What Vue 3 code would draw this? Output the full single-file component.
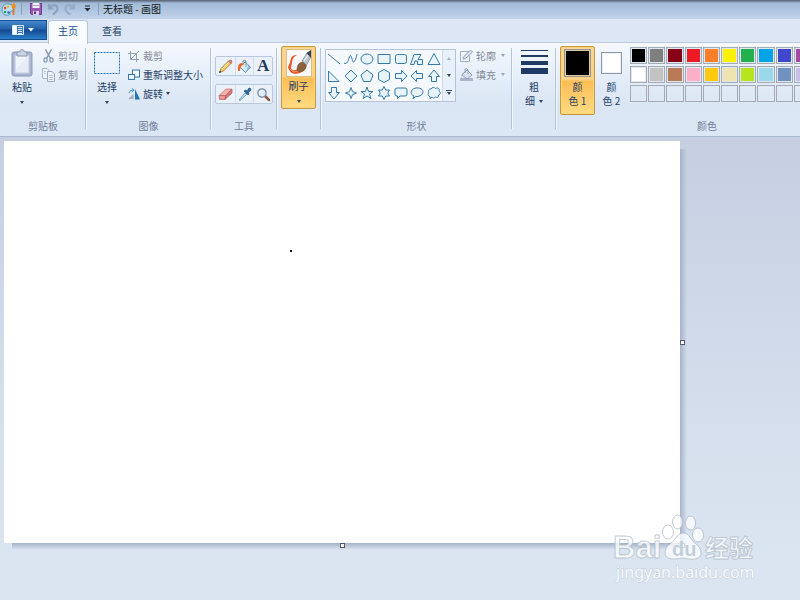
<script setup>
const shapes = [
  'M2 3L14 13',
  'M1 12C4 14 5 10 6 7S8 3 9 8S12 12 14 3',
  'M2 8A6 5 0 1 1 14 8A6 5 0 1 1 2 8Z',
  'M2 3.5H14V12.5H2Z',
  'M4.500 3.500H11.500Q13.500 3.500 13.500 5.500V10.500Q13.500 12.500 11.500 12.500H4.500Q2.500 12.500 2.500 10.500V5.500Q2.500 3.500 4.500 3.500Z',
  'M1.500 13.500L5 3.500H12L9 8.500H13.500V13.500H8.500V10H6L5 13.500Z',
  'M8 2.500L14 13.500H2Z',
  'M2.500 3V13.500H13Z',
  'M8 2L14 8L8 14L2 8Z',
  'M8 2L14 7L11.500 13.500H4.500L2 7Z',
  'M8 1.500L13.500 4.500V11.500L8 14.500L2.500 11.500V4.500Z',
  'M2.500 5.500H8.500V2.500L14 8L8.500 13.500V10.500H2.500Z',
  'M13.500 5.500H7.500V2.500L2 8L7.500 13.500V10.500H13.500Z',
  'M5.500 13.500V8.500H2.500L8 2L13.500 8.500H10.500V13.500Z',
  'M5.500 2.500V7.500H2.500L8 14L13.500 7.500H10.500V2.500Z',
  'M8 2.500L9.500 6.500L13.500 8L9.500 9.500L8 13.500L6.500 9.500L2.500 8L6.500 6.500Z',
  'M8 2L9.500 6.500H14L10.500 9L12 13.500L8 11L4 13.500L5.500 9L2 6.500H6.500Z',
  'M8 1.500L9.800 5H13.500L11.800 8L13.500 11H9.800L8 14.500L6.200 11H2.500L4.200 8L2.500 5H6.200Z',
  'M4 3H12Q14 3 14 5V9Q14 11 12 11H7L4.500 13.500V11H4Q2 11 2 9V5Q2 3 4 3Z',
  'M4 13.500L5 11C1 10 1 4.500 6 3.200C11 2 14.500 4.500 14 7.500C13.500 10.500 9 12 7 11.500Z',
  'M4 11.500C1.500 11 1.500 8.500 3 8C1.500 6 3 3.500 5 4C6 2 8.500 2 9.500 3.500C12 2 14 4 13 6C15 7 14.500 10 12.500 10C13 12 11 13 9.500 12C8 13.500 6.500 13 6 12L4 13.500Z'
]
const names = ['直线', '曲线', '椭圆形', '矩形', '圆角矩形', '多边形', '三角形', '直角三角形', '菱形', '五边形', '六边形', '右箭头', '左箭头', '上箭头', '下箭头', '四角星', '五角星', '六角星', '圆角矩形标注', '椭圆形标注', '云形标注']
const palette = [
  '#000000', '#7f7f7f', '#880015', '#ed1c24', '#ff7f27', '#fff200', '#22b14c', '#00a2e8', '#3f48cc', '#a349a4',
  '#ffffff', '#c3c3c3', '#b97a57', '#ffaec9', '#ffc90e', '#efe4b0', '#b5e61d', '#99d9ea', '#7092be', '#c8bfe7',
  ...Array(10).fill('')
]
</script>

<template>
  <div class="app">
    <header class="titlebar">
      <svg class="logo" width="16" height="16" viewBox="0 0 16 16" aria-hidden="true">
        <path d="M8 3C4 2 1 5 1 9C1 13 4 15 8 14C10 13 8 11 10 10C13 10 13 8 12 6C11 4 10 3.500 8 3Z" fill="#b9e0f2" stroke="#4d9cc0" />
        <circle cx="4" cy="7" r="1.300" fill="#e44a2b" /><circle cx="7" cy="5.500" r="1.300" fill="#f0b21c" />
        <circle cx="4" cy="11" r="1.300" fill="#31a04a" /><circle cx="7.500" cy="11.500" r="1.300" fill="#3a62c4" />
        <path d="M12.500 7V14" stroke="#d4812c" stroke-width="2" /><path d="M11 7L10.500 3L12 4L13 1L14.500 4V7Z" fill="#f38b1c" />
      </svg>
      <span class="tick"></span>
      <button class="quick" aria-label="保存">
        <svg width="14" height="14" viewBox="0 0 14 14"><path d="M1.500 1.500H12.500V12.500H2.500L1.500 11.500Z" fill="#9a55b5" stroke="#71398e" /><path d="M3.500 1H10.500V6H3.500Z" fill="#f1eff8" /><path d="M4 3.500H10" stroke="#b2a8c8" /><path d="M4 9H10V13H4Z" fill="#d6d1e5" /><path d="M5 9.500H7V12H5Z" fill="#5a3574" /></svg>
      </button>
      <button class="quick" aria-label="撤消">
        <svg width="14" height="14" viewBox="0 0 14 14"><path d="M3 2V6.500H7.500M3.500 6C6 2 11 2.500 11.500 6C12 9 9 11 7 12.500" fill="none" stroke="#8ea1c0" stroke-width="2.200" /></svg>
      </button>
      <button class="quick" aria-label="重做">
        <svg width="14" height="14" viewBox="0 0 14 14"><path d="M11 2V6.500H6.500M10.500 6C8 2 3 2.500 2.500 6C2 9 5 11 7 12.500" fill="none" stroke="#9aadc8" stroke-width="2.200" /></svg>
      </button>
      <button class="quick more" aria-label="自定义快速访问工具栏">
        <svg width="7" height="7" viewBox="0 0 7 7"><path d="M1 1H6" stroke="#222c3a" /><path d="M0.500 3H6.500L3.500 6.500Z" fill="#222c3a" /></svg>
      </button>
      <span class="tick"></span>
      <h1>无标题 - 画图</h1>
    </header>

    <nav class="tabs">
      <button class="file" aria-label="画图菜单">
        <svg width="22" height="10" viewBox="0 0 22 10"><path d="M0.500 0.500H11.500V9.500H0.500Z" fill="#fff" stroke="#dce9f8" /><path d="M5 1V9H11V1Z" fill="#3b76bb" /><path d="M6 2.500H10M6 4.500H10M6 6.500H10M6 8.500H10" stroke="#d6e6f7" /><path d="M16 3H22L19 6.500Z" fill="#fff" /></svg>
      </button>
      <button class="tab active">主页</button>
      <button class="tab">查看</button>
    </nav>

    <main class="ribbon">
      <section class="group clipboard">
        <div class="tools">
          <button class="large">
            <span class="pic"><svg width="22" height="28" viewBox="0 0 22 28"><rect x="1" y="3" width="20" height="24" rx="2" fill="#a8b5cd" stroke="#8c9bb9" /><path d="M4 6H18V24H4Z" fill="#e5ecf6" stroke="#c4cfdf" /><path d="M5 7H17L5 20Z" fill="#f0f4fa" /><path d="M6 7V3H8.500Q9 0.500 11 0.500T13.500 3H16V7Z" fill="#cbd4e3" stroke="#8999b6" /></svg></span>
            <span class="name">粘贴</span><i class="arrow"></i>
          </button>
          <div class="stack">
            <button class="small muted"><svg width="13" height="14" viewBox="0 0 13 14"><path d="M3.500 0.500L8.500 9.500M9.500 0.500L4.500 9.500" stroke="#8796b3" stroke-width="1.500" /><ellipse cx="3.500" cy="11" rx="1.600" ry="2.200" fill="none" stroke="#8796b3" stroke-width="1.200" /><ellipse cx="9.500" cy="11" rx="1.600" ry="2.200" fill="none" stroke="#8796b3" stroke-width="1.200" /></svg>剪切</button>
            <button class="small muted"><svg width="13" height="14" viewBox="0 0 13 14"><path d="M0.500 0.500H5L7.500 3V10.500H0.500Z" fill="#edf2f9" stroke="#a7b4ca" /><path d="M5.500 3.500H10L12.500 6V13.500H5.500Z" fill="#edf2f9" stroke="#9aa9c2" /><path d="M7 7.500H11M7 9.500H11M7 11.500H11M2 3.500H4M2 5.500H4" stroke="#b7c2d4" /></svg>复制</button>
          </div>
        </div>
        <h2>剪贴板</h2>
      </section>

      <section class="group image">
        <div class="tools">
          <button class="large">
            <span class="pic"><svg width="26" height="22" viewBox="0 0 26 22"><rect x="0.500" y="0.500" width="25" height="21" fill="#eaf3fc" fill-opacity=".6" stroke="#2176b2" stroke-dasharray="2 1" /></svg></span>
            <span class="name">选择</span><i class="arrow"></i>
          </button>
          <div class="stack">
            <button class="small muted"><svg width="12" height="12" viewBox="0 0 12 12"><path d="M2.500 1V9.500H11M0 3.500H8.500V12M3 9L11 1" fill="none" stroke="#92a1b9" /></svg>裁剪</button>
            <button class="small"><svg width="12" height="12" viewBox="0 0 12 12"><rect x="4.500" y="1" width="7" height="7" fill="#f4faff" stroke="#3179aa" /><rect x="0.500" y="5.500" width="6" height="5" fill="#eef7ff" stroke="#3179aa" /></svg>重新调整大小</button>
            <button class="small"><svg width="12" height="12" viewBox="0 0 12 12"><path d="M0 11L5.500 6V11Z" fill="#a7afba" /><path d="M7 1V11.500H12Z" fill="#1e76b5" /><path d="M1 5Q2 1.500 5 2M4 0.500L6 2L4 4" fill="none" stroke="#3b94d1" /></svg>旋转<i class="arrow"></i></button>
          </div>
        </div>
        <h2>图像</h2>
      </section>

      <section class="group toolset">
        <div class="tools toolrows">
          <div class="toolrow">
            <button aria-label="铅笔"><svg width="15" height="15" viewBox="0 0 15 15"><path d="M1.500 13.500L3 9.500L10.500 2L13 4.500L5.500 12Z" fill="#f3cf66" stroke="#9d7142" stroke-width=".8" /><path d="M10.500 2L12 1Q14 1 14 3L13 4.500Z" fill="#e67e7d" stroke="#a55656" stroke-width=".6" /><path d="M1 14L2 11.500L3.500 13Z" fill="#363e49" /><path d="M4 10L10.500 3.500" stroke="#fff0ac" /></svg></button>
            <button aria-label="填充"><svg width="15" height="15" viewBox="0 0 15 15"><path d="M3 8L8 3L13.500 8L8.500 13.500Z" fill="#d5ebf7" stroke="#5b8daf" /><path d="M6 6V2Q7.500 0.500 9 2V8" fill="none" stroke="#7897ac" /><path d="M1 12Q0 5 4 4L8 5Q3 6 3 12Z" fill="#ea6b32" /><path d="M11 7L13.500 8L9 13Z" fill="#82b7d8" /></svg></button>
            <button class="letter">A</button>
          </div>
          <div class="toolrow">
            <button aria-label="橡皮擦"><svg width="15" height="15" viewBox="0 0 15 15"><path d="M1 8.500L8 2H14L7.500 8.500Z" fill="#f6b1b0" stroke="#c76f70" stroke-width=".7" /><path d="M1 8.500H7.500L7 12.500H1.500Z" fill="#ef9691" stroke="#b65e60" stroke-width=".7" /><path d="M7.500 8.500L14 2V6L7 12.500Z" fill="#d97375" stroke="#b65e60" stroke-width=".7" /></svg></button>
            <button aria-label="颜色选取器"><svg width="15" height="15" viewBox="0 0 15 15"><path d="M2 13L8 6L9.500 7.500L3 13.500Z" fill="#c7e4f5" stroke="#578baf" stroke-width=".8" /><path d="M7 4L8.500 3L10 4L12 1Q14 1 14 3L11.500 5.500L12 7L11 8Z" fill="#2a6aa4" stroke="#214f7d" stroke-width=".7" /></svg></button>
            <button aria-label="放大镜"><svg width="15" height="15" viewBox="0 0 15 15"><path d="M9 9L13 13" stroke="#8d5c40" stroke-width="2.500" stroke-linecap="round" /><circle cx="6" cy="6" r="4.200" fill="#dceefa" stroke="#77899e" stroke-width="1.200" /><path d="M3.500 6Q4 3.500 6.500 3.500" stroke="#fff" fill="none" /></svg></button>
          </div>
        </div>
        <h2>工具</h2>
      </section>

      <section class="group brushes">
        <button class="pressed brush">
          <svg width="26" height="28" viewBox="0 0 26 28"><rect x=".5" y=".5" width="25" height="27" fill="#fafafa" stroke="#d8bd80" /><path d="M11 6C3 6 6 11 2 18C4 27 13 26 19 21L15 19C9 22 5 22 5 18C7 13 5 9 11 6Z" fill="#e85527" /><path d="M4 20Q8 25 15 21" fill="none" stroke="#fb9467" /><path d="M11 21C11 15 14 13 18 13C21 15 21 19 18 21C15 23 12 23 11 21Z" fill="#8e623c" stroke="#67452d" stroke-width=".6" /><path d="M16 12L21 4L25 8L20.500 16Z" fill="#bec8d2" stroke="#758593" stroke-width=".7" /><path d="M20.500 4L25 1V9Z" fill="#344256" /><path d="M18 12L22 6" stroke="#f7fbff" /></svg>
          <span class="name">刷子</span><i class="arrow"></i>
        </button>
      </section>

      <section class="group shapes">
        <div class="tools">
          <div class="gallery">
            <div class="shapegrid">
              <button v-for="(d, i) in shapes" :key="i" :aria-label="names[i]"><svg width="16" height="16" viewBox="0 0 16 16"><path :d="d" :fill="i < 2 ? 'none' : '#e8f4fc'" stroke="#3479aa" /></svg></button>
            </div>
            <div class="scroller">
              <button aria-label="向上滚动"><i class="arrow up"></i></button>
              <button aria-label="向下滚动"><i class="arrow"></i></button>
              <button class="expand" aria-label="展开"><i class="arrow"></i></button>
            </div>
          </div>
          <div class="stack">
            <button class="small muted"><svg width="13" height="13" viewBox="0 0 13 13"><path d="M9 2.500H0.500V12.500H9.500V7" fill="none" stroke="#a1afc5" /><path d="M3 10L4 7.500L10.500 1L12.500 3L5.500 9.500Z" fill="#dfe6f0" stroke="#8e9db8" /></svg>轮廓<i class="arrow"></i></button>
            <button class="small muted"><svg width="13" height="13" viewBox="0 0 13 13"><path d="M0 10H13V13H0Z" fill="#a9b6cc" /><path d="M2 7L7 2L12 7L7 11Z" fill="#dae2ee" stroke="#8f9fba" /><path d="M5 5V1Q6.500 0 8 2V6" fill="none" stroke="#8f9fba" /><path d="M1 10Q1 5 5 4L2 7Z" fill="#93a3bf" /></svg>填充<i class="arrow"></i></button>
          </div>
        </div>
        <h2>形状</h2>
      </section>

      <section class="group size">
        <button class="large thickness">
          <span class="pic"><svg width="27" height="26" viewBox="0 0 27 26"><path d="M0 1H27V2H0ZM0 6H27V8H0ZM0 12H27V16H0ZM0 19H27V25H0Z" fill="#1f3b64" /></svg></span>
          <span class="name">粗<br />细<i class="arrow"></i></span>
        </button>
      </section>

      <section class="group colors">
        <div class="tools">
          <button class="pressed color"><span class="chip"></span><span class="name">颜<br />色 1</span></button>
          <button class="color second"><span class="chip"></span><span class="name">颜<br />色 2</span></button>
          <div class="palette">
            <button v-for="(c, i) in palette" :key="i" :class="{ empty: !c }" :style="{ backgroundColor: c }" :aria-label="c || '自定义颜色'"></button>
          </div>
        </div>
        <h2>颜色</h2>
      </section>
    </main>

    <div class="workspace">
      <div class="sheet">
        <span class="dot"></span>
        <span class="handle east"></span>
        <span class="handle south"></span>
        <span class="handle corner"></span>
      </div>
      <svg class="watermark" width="150" height="72" viewBox="0 0 150 72">
        <g class="mark">
          <ellipse cx="58" cy="19" rx="5.500" ry="7" /><ellipse cx="67.500" cy="9" rx="5" ry="7" /><ellipse cx="80.500" cy="10" rx="5" ry="7" /><ellipse cx="88" cy="22" rx="5.500" ry="7" />
          <path d="M73 20C67 20 66 27 60 31C53 36 53 46 63 46C68 46 70 45 73 45S80 47 85 46C93 45 93 36 86 31C80 27 80 20 73 20Z" />
          <text class="brand" x="3" y="45">Bai</text>
          <text class="cn" x="95" y="44">经验</text>
        </g>
        <text class="du" x="62" y="43">du</text>
        <text class="url" x="6" y="65">jingyan.baidu.com</text>
      </svg>
    </div>
  </div>
</template>

<style>
body { margin: 0; }
</style>

<style scoped>
.app {
  display: flex;
  flex-direction: column;
  min-height: 100vh;
  overflow: hidden;
  position: relative;
  font: 10px/14px "Noto Sans CJK SC", sans-serif;
  color: #243f66;
  background: #dce6f4;
}
button { font: inherit; color: inherit; background: none; border: 0; padding: 0; margin: 0; }
svg { display: block; flex: none; }
h1, h2 { margin: 0; font: inherit; }
.titlebar {
  display: flex;
  align-items: center;
  box-sizing: border-box;
  height: 19px;
  padding: 0 0 2px 1px;
  background: linear-gradient(#555f6b, #8398b0 2px, #a2bad7 3px, #b3c8e1 12px, #c1d3e8);
}
.logo { margin-right: 4px; }
.tick { width: 1px; height: 12px; background: #8b9eb8; }
.quick { width: 17px; display: grid; place-items: center; }
.tick + .quick { margin-left: 5px; }
.more { width: 14px; margin: 0 4px 0 2px; }
.titlebar h1 { margin-left: 4px; color: #101820; }
.tabs { display: flex; height: 23px; background: #dce6f4; }
.file {
  width: 47px;
  height: 20px;
  margin: 1px 1px 0 0;
  display: grid;
  place-items: center;
  background: linear-gradient(#4588cb, #2361a9 45%, #134a91 50%, #2a80c8);
  border: 1px solid #164d8d;
  border-left: 0;
}
.tab { width: 40px; height: 22px; padding-bottom: 1px; margin-top: 1px; margin-right: 4px; border: 1px solid transparent; border-bottom: 0; }
.tab.active { height: 24px; padding-bottom: 3px; background: #f8fbff; border-color: #b6c7dc; border-radius: 3px 3px 0 0; position: relative; z-index: 1; color: #1e4b8f; }
.ribbon {
  display: flex;
  height: 93px;
  border-top: 1px solid #bccbdf;
  border-bottom: 1px solid #a9b9cf;
  background: linear-gradient(#f5f9fe, #e5eefa 35%, #dbe6f4 65%, #dce7f5);
}
.group { position: relative; flex: none; box-sizing: border-box; display: flex; flex-direction: column; padding: 3px 4px; }
.group::after { content: ""; position: absolute; right: 0; top: 5px; bottom: 7px; width: 1px; background: #b3c3d9; box-shadow: 1px 0 #f2f7fd; }
.group h2 { margin-top: auto; text-align: center; color: #71809a; }
.tools { display: flex; }
.clipboard { width: 86px; }
.image { width: 125px; }
.toolset { width: 66px; }
.brushes { width: 44px; }
.shapes { width: 191px; }
.size { width: 44px; }
.colors { width: 302px; }
.large { width: 36px; display: flex; flex-direction: column; align-items: center; }
.pic { height: 34px; display: grid; place-items: center; }
.name { line-height: 14px; text-align: center; }
.large .arrow { margin-top: 7px; }
.clipboard .stack { padding-left: 2px; }
.image .large { width: 34px; }
.image .stack { padding-left: 4px; }
.small { display: flex; align-items: center; gap: 3px; height: 19px; white-space: nowrap; }
.muted { color: #838b97; }
.arrow { flex: none; display: inline-block; width: 0; height: 0; border: 2px solid transparent; border-top: 3px solid #2d4566; border-bottom: 0; }
.muted .arrow { border-top-color: #9aa3b0; margin-left: 2px; }
.toolrows { flex-direction: column; padding-top: 10px; gap: 8px; }
.toolrow { display: grid; grid-template-columns: repeat(3, 1fr); box-sizing: border-box; height: 20px; border: 1px solid #b9c8dd; border-radius: 2px; background: #eaf1fa; }
.toolrow button { display: grid; place-items: center; }
.toolrow button + button { border-left: 1px solid #d3deed; }
.toolrow .letter { font: bold 17px/18px "Liberation Serif", serif; color: #213c61; }
.pressed { box-sizing: border-box; border: 1px solid #c49a44; border-radius: 2px; background: linear-gradient(#fbd59d, #fdd08a 49%, #fdbd55 51%, #ffdb81); box-shadow: inset 0 0 0 1px #fbd479; }
.brush { width: 35px; height: 63px; display: flex; flex-direction: column; align-items: center; padding-top: 2px; }
.brush .name { margin-top: 2px; }
.brush .arrow { margin-top: 7px; }
.gallery { display: flex; box-sizing: border-box; width: 131px; height: 53px; margin: 3px 4px 0 0; border: 1px solid #b4c3d8; background: #f5f9fe; }
.shapegrid { flex: 1; display: grid; grid-template-columns: repeat(7, 1fr); grid-template-rows: repeat(3, 1fr); }
.shapegrid button { display: grid; place-items: center; }
.scroller { width: 12px; display: grid; grid-template-rows: repeat(3, 1fr); border-left: 1px solid #cdd8e7; background: #e8f0fa; }
.scroller button { display: grid; place-items: center; align-content: center; gap: 1px; }
.scroller .up { border-top: 0; border-bottom: 3px solid #a3aebd; }
.expand::before { content: ""; width: 6px; height: 1px; background: #2d4566; }
.thickness .pic { height: 32px; }
.thickness .name { padding-top: 2px; }
.thickness .name .arrow { margin: 0 0 2px 4px; }
.color { width: 35px; height: 69px; display: flex; flex-direction: column; align-items: center; padding-top: 3px; }
.chip { box-sizing: border-box; width: 21px; height: 22px; margin: 3px 0 6px; background: #fff; border: 1px solid #8e98a6; box-shadow: inset 0 0 0 1px #edf1f6; }
.pressed .chip { width: 27px; height: 28px; margin: 0 0 3px; background: #000; border-color: #989487; box-shadow: inset 0 0 0 1px #d9cba9; }
.pressed.color { padding-top: 2px; }
.second { width: 33px; }
.palette { display: grid; grid-template-columns: repeat(10, 1fr); grid-auto-rows: 17px; gap: 2px 1px; width: 181px; height: 55px; margin: 1px 0 0 2px; }
.palette button { border: 1px solid #a5abb4; box-shadow: inset 0 0 0 1px #e1e7ef; }
.palette .empty { box-shadow: inset 0 0 0 1px #dfe8f4; }
.workspace { position: relative; flex: 1; display: flex; padding: 4px 120px 57px 4px; background: linear-gradient(#c5cfe1, #cfd9e9 40%, #dbe5f1 90%); }
.sheet { position: relative; flex: 1; background: #fff; }
.sheet::before { content: ""; position: absolute; left: 100%; top: 8px; bottom: 0; width: 7px; background: linear-gradient(90deg, #a5b2ca, #bfcbdd00); }
.sheet::after { content: ""; position: absolute; left: 8px; right: -6px; top: 100%; height: 7px; background: linear-gradient(#a5b2c8, #c1cddd00); }
.dot { position: absolute; left: 42%; top: 27%; width: 2px; height: 2px; margin-left: 2px; background: #111; }
.handle { position: absolute; z-index: 1; box-sizing: border-box; width: 5px; height: 5px; border: 1px solid #545b65; background: #fff; }
.east { left: 100%; top: 50%; margin-top: -2px; }
.south { left: 50%; top: 100%; margin-left: -2px; }
.corner { left: 100%; top: 100%; }
.watermark { position: absolute; z-index: 2; right: 40px; bottom: 15px; }
.mark { fill: #fff; fill-opacity: .75; stroke: #a9b5c4; stroke-opacity: .7; }
.brand { font: bold 31px "Liberation Sans", sans-serif; }
.cn { font: bold 24px "Noto Sans CJK SC", sans-serif; }
.du { font: bold 20px "Liberation Sans", sans-serif; fill: #c2cedd; }
.url { font: 16px "Noto Sans", sans-serif; fill: #fff; fill-opacity: .9; stroke: #a9b5c4; stroke-opacity: .5; paint-order: stroke; }
</style>
